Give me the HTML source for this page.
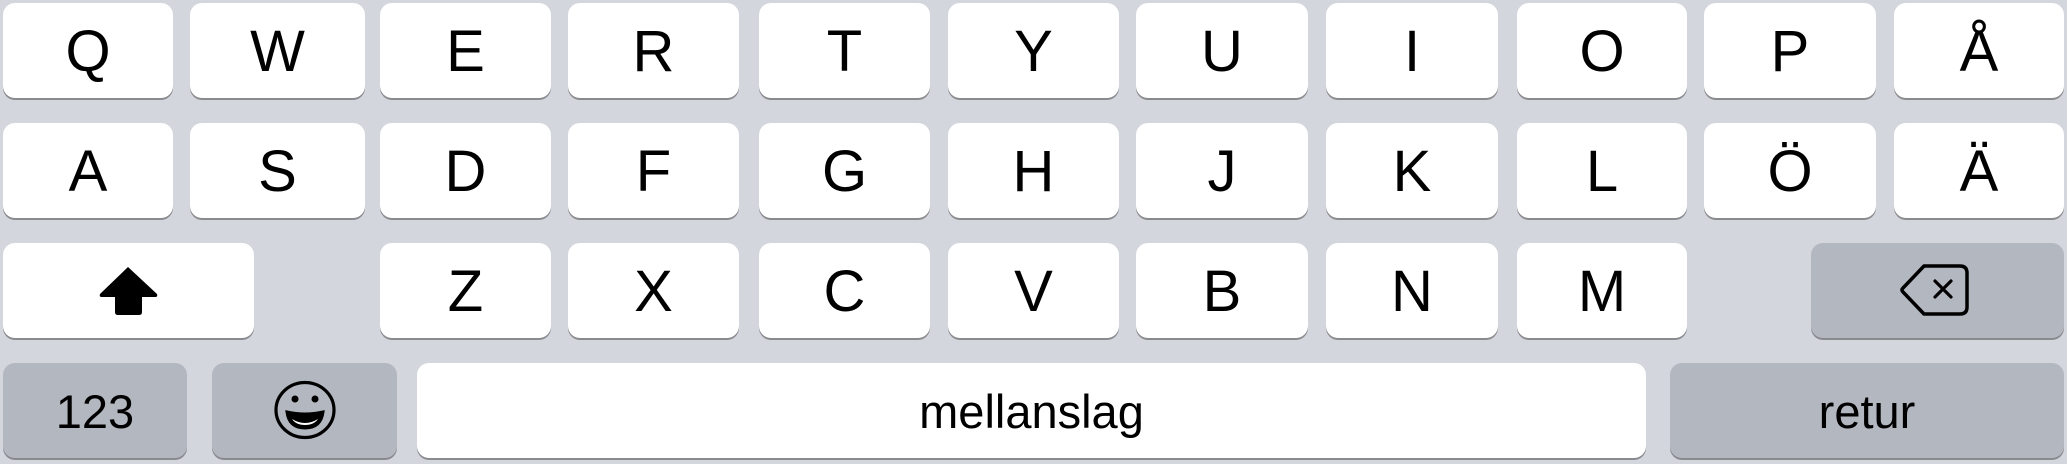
<!DOCTYPE html>
<html><head><meta charset="utf-8"><style>
body{margin:0;width:2067px;height:464px;background:#d3d6dc;position:relative;overflow:hidden;font-family:"Liberation Sans",sans-serif;}
.k{position:absolute;height:95px;background:#fff;border-radius:12px;box-shadow:0 2px 0 #898a8e;color:#000;text-align:center;}
.k span{display:block;padding-top:20px;font-size:58px;line-height:58px;}
.g{background:#b3b7bf;}
.s span{padding-top:26px;font-size:47px;line-height:46px;}
svg{position:absolute;}
</style></head><body>
<div class="k" style="left:3px;top:3px;width:170px"><span>Q</span></div>
<div class="k" style="left:190px;top:3px;width:175px"><span>W</span></div>
<div class="k" style="left:380px;top:3px;width:171px"><span>E</span></div>
<div class="k" style="left:568px;top:3px;width:171px"><span>R</span></div>
<div class="k" style="left:759px;top:3px;width:171px"><span>T</span></div>
<div class="k" style="left:948px;top:3px;width:171px"><span>Y</span></div>
<div class="k" style="left:1136px;top:3px;width:172px"><span>U</span></div>
<div class="k" style="left:1326px;top:3px;width:172px"><span>I</span></div>
<div class="k" style="left:1517px;top:3px;width:170px"><span>O</span></div>
<div class="k" style="left:1704px;top:3px;width:172px"><span>P</span></div>
<div class="k" style="left:1894px;top:3px;width:170px"><span>Å</span></div>

<div class="k" style="left:3px;top:123px;width:170px"><span>A</span></div>
<div class="k" style="left:190px;top:123px;width:175px"><span>S</span></div>
<div class="k" style="left:380px;top:123px;width:171px"><span>D</span></div>
<div class="k" style="left:568px;top:123px;width:171px"><span>F</span></div>
<div class="k" style="left:759px;top:123px;width:171px"><span>G</span></div>
<div class="k" style="left:948px;top:123px;width:171px"><span>H</span></div>
<div class="k" style="left:1136px;top:123px;width:172px"><span>J</span></div>
<div class="k" style="left:1326px;top:123px;width:172px"><span>K</span></div>
<div class="k" style="left:1517px;top:123px;width:170px"><span>L</span></div>
<div class="k" style="left:1704px;top:123px;width:172px"><span>Ö</span></div>
<div class="k" style="left:1894px;top:123px;width:170px"><span>Ä</span></div>

<div class="k" style="left:3px;top:243px;width:251px"></div>
<div class="k" style="left:380px;top:243px;width:171px"><span>Z</span></div>
<div class="k" style="left:568px;top:243px;width:171px"><span>X</span></div>
<div class="k" style="left:759px;top:243px;width:171px"><span>C</span></div>
<div class="k" style="left:948px;top:243px;width:171px"><span>V</span></div>
<div class="k" style="left:1136px;top:243px;width:172px"><span>B</span></div>
<div class="k" style="left:1326px;top:243px;width:172px"><span>N</span></div>
<div class="k" style="left:1517px;top:243px;width:170px"><span>M</span></div>
<div class="k g" style="left:1811px;top:243px;width:253px"></div>

<div class="k g s" style="left:3px;top:363px;width:184px"><span>123</span></div>
<div class="k g" style="left:212px;top:363px;width:185px"></div>
<div class="k s" style="left:417px;top:363px;width:1229px"><span>mellanslag</span></div>
<div class="k g s" style="left:1670px;top:363px;width:394px"><span>retur</span></div>

<svg width="2067" height="464" style="left:0;top:0">
<path d="M128 267 L157 294 Q158 297 155 297 L142 297 L142 312 Q142 315 139 315 L118 315 Q115 315 115 312 L115 297 L102 297 Q99 297 100 294 Z" fill="#000"/>
<path d="M1924 266 L1960 266 Q1967 266 1967 273 L1967 307 Q1967 314 1960 314 L1924 314 L1903 292 Q1901 290 1903 288 Z" fill="none" stroke="#000" stroke-width="3.5" stroke-linejoin="round"/>
<path d="M1935 281 L1951 297 M1951 281 L1935 297" stroke="#000" stroke-width="3.2" stroke-linecap="round"/>
<ellipse cx="305" cy="410" rx="29" ry="27.5" fill="none" stroke="#000" stroke-width="3.2"/>
<circle cx="295" cy="399" r="3.5" fill="#000"/>
<circle cx="315" cy="399" r="3.5" fill="#000"/>
<path d="M287 412 Q305 416 323 412 Q321 428 305 428 Q289 428 287 412 Z" fill="#000" stroke="#000" stroke-width="3"/>
<path d="M292 419 Q305 427 318 419 Q314 425 305 425 Q296 425 292 419 Z" fill="#fff"/>
</svg>
</body></html>
